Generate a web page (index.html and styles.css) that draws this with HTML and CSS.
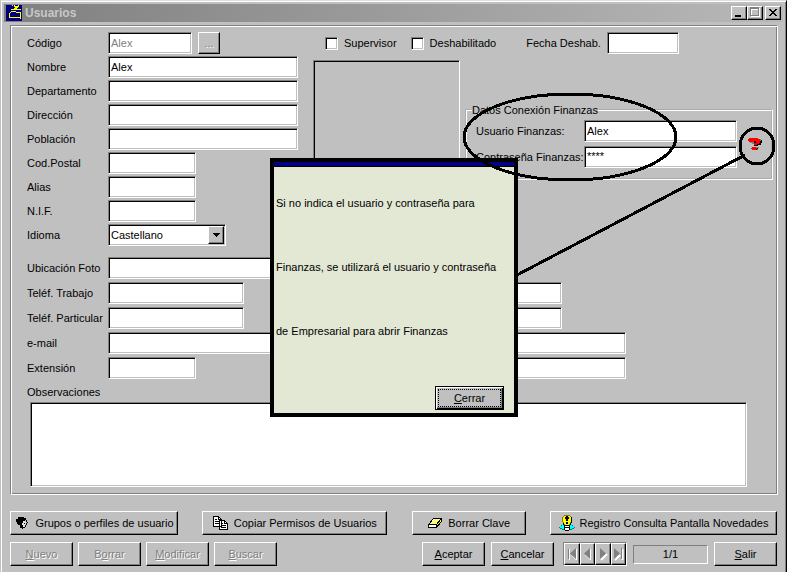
FILE: index.html
```html
<!DOCTYPE html>
<html lang="es">
<head>
<meta charset="utf-8">
<title>Usuarios</title>
<link rel="stylesheet" href="styles.css">
</head>
<body>
<main class="window">
  <header class="titlebar">
    <svg class="app-icon" width="16" height="16" viewBox="0 0 16 16" shape-rendering="crispEdges">
      <rect width="16" height="16" fill="#000080"/>
      <path d="M6 0h1v1H6zM7 1h1v1h1v1h3V2h1V0h-1v1H9V0H8v1H7zM8 3h3v1H8zM5 4h10v1H5zM5 6h5v1h5v7h-1V8h-4V7H5v1H4V7h1zM3 8h1v4h10v1H3z" fill="#ffff00"/>
    </svg>
    <h1 class="title">Usuarios</h1>
    <button class="caption-btn" aria-label="Minimizar"><svg width="12" height="10" shape-rendering="crispEdges"><path d="M3 8h6v2H3z"/></svg></button>
    <button class="caption-btn" aria-label="Maximizar" disabled><svg width="12" height="10" shape-rendering="crispEdges"><path d="M3.500 1v8.500h8V1M3 2.500h9" fill="none" stroke="#fff"/><path d="M2.500.5h8v8h-8zM2 1.500h9" fill="none" stroke="#808080"/></svg></button>
    <button class="caption-btn close" aria-label="Cerrar ventana"><svg width="12" height="10" shape-rendering="crispEdges"><path d="M3 2h2v1h1v1h2V3h1V2h2v1h-1v1H9v1H8v1h1v1h1v1h1v1H9V8H8V7H6v1H5v1H3V8h1V7h1V6h1V5H5V4H4V3H3z"/></svg></button>
  </header>

  <form class="panel">
    <div class="top">
      <div class="fields">
        <label for="codigo">Código</label>
        <div class="code-row"><input id="codigo" class="w-code" value="Alex" disabled><button type="button" class="btn browse" disabled>...</button></div>
        <label for="nombre">Nombre</label><input id="nombre" value="Alex">
        <label for="departamento">Departamento</label><input id="departamento">
        <label for="direccion">Dirección</label><input id="direccion">
        <label for="poblacion">Población</label><input id="poblacion">
        <label for="postal">Cod.Postal</label><input id="postal" class="w-short">
        <label for="alias">Alias</label><input id="alias" class="w-short">
        <label for="nif">N.I.F.</label><input id="nif" class="w-short">
        <label for="idioma">Idioma</label>
        <div class="combo">
          <select id="idioma"><option>Castellano</option></select>
          <span class="combo-arrow"><svg width="7" height="4" shape-rendering="crispEdges"><path d="M0 0h7v1H6v1H5v1H4v1H3V3H2V2H1V1H0z"/></svg></span>
        </div>
      </div>
      <div class="side">
        <div class="flags">
          <input type="checkbox" id="supervisor"><label for="supervisor">Supervisor</label>
          <input type="checkbox" id="deshab"><label for="deshab">Deshabilitado</label>
          <label for="fecha" class="date-label">Fecha Deshab.</label><input id="fecha" class="w-date">
        </div>
        <div class="side-body">
          <div class="photo"></div>
          <fieldset class="finance">
            <legend>Datos Conexión Finanzas</legend>
            <div class="finance-fields">
              <label for="ufin">Usuario Finanzas:</label><input id="ufin" value="Alex">
              <label for="cfin">Contraseña Finanzas:</label><input id="cfin" class="secret" value="****">
            </div>
            <button type="button" class="help" aria-label="Ayuda">
              <svg width="15" height="14" viewBox="0 0 15 14" shape-rendering="crispEdges">
                <path d="M3 2h10v1h2v3h-1v2h-3v1H7V7h3V6H6V5H3zM6 10h5v3H6z"/>
                <path d="M13 2h1v2h-1zM3 5h4v2H5V6H3zM9 10h3v1H9zM10 12h1v1h-1z" fill="#808080"/>
                <path d="M2 1h9v1h2v4h-1v1h-2v1H7V6h2V4H7v1H2V4H1V2h1zM5 10h4v1h1v1H9v1H5v-1H4v-1h1z" fill="#ff0000"/>
              </svg>
            </button>
          </fieldset>
        </div>
      </div>
    </div>

    <div class="contact">
      <label for="foto">Ubicación Foto</label><div class="line"><input id="foto" class="w-photo"></div>
      <label for="trabajo">Teléf. Trabajo</label><div class="line tel"><input id="trabajo" class="w-phone"><input class="w-phone" aria-label="Teléf. Trabajo 2"></div>
      <label for="particular">Teléf. Particular</label><div class="line tel"><input id="particular" class="w-phone"><input class="w-phone" aria-label="Teléf. Particular 2"></div>
      <label for="email">e-mail</label><div class="line"><input id="email"></div>
      <label for="extension">Extensión</label><div class="line"><input id="extension" class="w-short"><input class="w-extra" aria-label="Extensión 2"></div>
    </div>
    <label class="notes-label" for="obs">Observaciones</label>
    <textarea id="obs"></textarea>
  </form>

  <footer class="actions">
    <div class="row">
      <button class="btn icon-btn w-groups">
        <svg width="16" height="16" viewBox="0 0 16 16" shape-rendering="crispEdges">
          <path d="M4 2h6v1h1v3H9v2H8v2h1v3H6v-3H4V9H3V7H2V4h2z"/>
          <path d="M9 6h2v1h1v3h-1v2H9v-2H8V8h1z" fill="#e0e0e0"/>
          <path d="M11 3h1v2h-1zM12 5h1v2h-1zM13 7h1v1h-1zM12 8h1v2h-1zM11 10h1v2h-1zM9 12h2v1H9zM8 13h1v1H8zM10 8h1v1h-1z"/>
        </svg>Grupos o perfiles de usuario</button>
      <button class="btn icon-btn w-copy">
        <svg width="16" height="16" viewBox="0 0 16 16" shape-rendering="crispEdges">
          <path d="M.5 1.500h5l3 3v7h-8zM6.500 5.500h5l3 3v6h-8z" fill="#fff" stroke="#000"/>
          <path d="M5.500 1.500v3h3M11.500 5.500v3h3M2 4.500h2M2 6.500h4M2 8.500h4M8 8.500h2M8 10.500h5M8 12.500h5" fill="none" stroke="#000"/>
        </svg>Copiar Permisos de Usuarios</button>
      <button class="btn icon-btn w-clear">
        <svg width="16" height="16" viewBox="0 0 16 16" shape-rendering="crispEdges">
          <path d="M6.500 3.500h8v3l-5 6h-8v-3z" fill="#fff" stroke="#000"/>
          <path d="M7 4h7l-5 5H2z" fill="#ffff80"/>
          <path d="M10 9l4-5v2l-4 5z" fill="#ffff00"/>
          <path d="M1.500 9.500h8v3M9.500 9.500l5-6" fill="none" stroke="#000"/>
        </svg>Borrar Clave</button>
      <button class="btn icon-btn w-news">
        <svg width="16" height="16" viewBox="0 0 16 16" shape-rendering="crispEdges">
          <path d="M3 9h2v1h1v4H3v-1H1v-2h1v-1h1zM11 9h2v1h1v1h1v2h-2v1h-3v-4h1z" fill="#00ffff"/>
          <path d="M2 10h1v1H2zM0 12h1v1H0zM1 13h2v1H1zM3 14h2v1H3zM13 10h1v1h-1zM15 12h1v1h-1zM13 13h2v1h-2zM11 14h2v1h-2z" fill="#008080"/>
          <path d="M5 0h6v1h1v1h1v5h-1v2h-1v1H5V9H4V7H3V2h1V1h1z" fill="#808000"/>
          <path d="M5 1h6v1h1v5h-1v2h-1v1H6V9H5V7H4V2h1z" fill="#ffff00"/>
          <path d="M12 2h1v6h-1zM11 8h1v2h-1zM4 8h1v2H4z"/>
          <path d="M7 1h2v5H7zM7 7h2v2H7zM6 2h4v2H6z"/>
          <path d="M6 10h4v5H6z" fill="#fff"/>
          <path d="M5 10h6v1H5zM6 12h4v1H6zM5 11h1v4H5zM10 11h1v4h-1zM6 15h4v1H6z"/>
        </svg>Registro Consulta Pantalla Novedades</button>
    </div>
    <div class="row">
      <div class="group">
        <button class="btn cmd" disabled><span><u>N</u>uevo</span></button>
        <button class="btn cmd" disabled><span>B<u>o</u>rrar</span></button>
        <button class="btn cmd" disabled><span><u>M</u>odificar</span></button>
        <button class="btn cmd" disabled><span><u>B</u>uscar</span></button>
      </div>
      <div class="group right">
        <button class="btn cmd"><span><u>A</u>ceptar</span></button>
        <button class="btn cmd"><span><u>C</u>ancelar</span></button>
        <div class="nav">
          <button aria-label="Primero" disabled><svg width="12" height="14"><path d="M3.500 2v11M10.500 2v11l-5-5" fill="none" stroke="#fff"/><path d="M2 2h1v10H2zM10 1v11L4 6.500z" fill="#808080"/></svg></button>
          <button aria-label="Anterior" disabled><svg width="12" height="14"><path d="M9.500 2v11l-5-5" fill="none" stroke="#fff"/><path d="M9 1v11L3 6.500z" fill="#808080"/></svg></button>
          <button aria-label="Siguiente" disabled><svg width="12" height="14"><path d="M4 13l6-6" fill="none" stroke="#fff" stroke-width="2"/><path d="M3 1v11l6-5.500z" fill="#808080"/></svg></button>
          <button aria-label="Último" disabled><svg width="12" height="14"><path d="M3 13l5-5M10.500 2v11" fill="none" stroke="#fff" stroke-width="2"/><path d="M2 1v11l6-5.500zM9 1h1v11H9z" fill="#808080"/></svg></button>
        </div>
        <output class="counter">1/1</output>
        <button class="btn cmd"><span><u>S</u>alir</span></button>
      </div>
    </div>
  </footer>

  <section class="dialog" role="dialog">
    <div class="dialog-bar"></div>
    <p>Si no indica el usuario y contraseña para</p>
    <p>Finanzas, se utilizará el usuario y contraseña</p>
    <p>de Empresarial para abrir Finanzas</p>
    <button class="btn dialog-close"><span><u>C</u>errar</span></button>
  </section>

  <svg class="marks" width="787" height="300" viewBox="0 0 787 300" shape-rendering="crispEdges">
    <ellipse cx="570" cy="137" rx="106" ry="43"/>
    <ellipse cx="757" cy="146" rx="17" ry="18"/>
    <path d="M745 155L517 275"/>
  </svg>
</main>
</body>
</html>
```
FILE: styles.css
```css
* { box-sizing: border-box; }

body {
  margin: 0;
  background: #c0c0c0;
  color: #000;
  font: 11px/14px "Liberation Sans", Arial, sans-serif;
}

button, input, select, textarea {
  margin: 0;
  font: inherit;
  color: inherit;
  border-radius: 0;
}

button { padding: 0; }

.window {
  position: relative;
  min-height: 100vh;
  padding: 2px 2px 5px 2px;
  border: solid;
  border-width: 1px 1px 0 1px;
  border-color: #dfdfdf #000 #000 #c0c0c0;
  box-shadow: inset 1px 1px #fff, inset -1px 0 #808080;
}

.titlebar {
  display: flex;
  align-items: center;
  height: 18px;
  margin: 1px 1px 0 1px;
  padding: 0 2px;
  background: linear-gradient(to right, #808080, #b8b8b8);
}

.app-icon { flex: none; }

.title {
  flex: 1;
  margin: 0 0 0 3px;
  font-size: 12px;
  font-weight: bold;
  color: #c8c8c8;
}

.caption-btn {
  display: flex;
  width: 16px;
  height: 14px;
  background: #c0c0c0;
  border: 1px solid;
  border-color: #fff #000 #000 #fff;
  box-shadow: inset -1px -1px #808080;
}

.close { margin-left: 2px; }

.panel {
  margin: 3px 6px 0 7px;
  padding: 6px 4px 7px 16px;
  border: 1px solid;
  border-color: #808080 #fff #fff #808080;
  box-shadow: inset 1px 1px #fff, inset -1px -1px #808080;
}

.panel input, select, textarea {
  display: block;
  width: 100%;
  height: 22px;
  padding: 0 2px;
  background: #fff;
  border: 1px solid;
  border-color: #808080 #fff #fff #808080;
  box-shadow: inset 1px 1px #000, inset -1px -1px #c0c0c0;
  outline: none;
}

.panel input:disabled { color: #808080; }

.panel .w-code { width: 84px; }
.panel .w-short { width: 88px; }
.panel .w-date { width: 72px; }
.panel .w-phone { width: 136px; }
.panel .w-photo { width: 300px; }
.panel .w-extra { width: 200px; }

.top {
  display: flex;
  gap: 15px;
}

.fields {
  display: grid;
  grid-template-columns: 81px 190px;
  row-gap: 2px;
  align-items: center;
}

.code-row {
  display: flex;
  gap: 6px;
}

.btn {
  height: 24px;
  background: #c0c0c0;
  border: 1px solid;
  border-color: #fff #000 #000 #fff;
  box-shadow: inset -1px -1px #808080;
}

.btn:disabled {
  color: #808080;
  text-shadow: 1px 1px #fff;
}

.browse {
  width: 22px;
  height: 22px;
}

.combo {
  position: relative;
  width: 118px;
}

select { appearance: none; }

.combo-arrow {
  position: absolute;
  top: 2px;
  right: 2px;
  display: flex;
  align-items: center;
  justify-content: center;
  width: 16px;
  height: 18px;
  background: #c0c0c0;
  border: 1px solid;
  border-color: #fff #000 #000 #fff;
  box-shadow: inset -1px -1px #808080;
  pointer-events: none;
}

.side { flex: 1; }

.flags {
  display: flex;
  align-items: center;
  height: 22px;
  padding-left: 12px;
}

.panel input[type="checkbox"] {
  appearance: none;
  width: 13px;
  height: 13px;
  margin-right: 6px;
  padding: 0;
}

.flags label { margin-right: 14px; }

.flags .date-label {
  margin-left: 16px;
  margin-right: 6px;
}

.side-body {
  display: flex;
  align-items: flex-start;
  gap: 5px;
  margin-top: 6px;
}

.photo {
  width: 147px;
  height: 180px;
  border: 1px solid;
  border-color: #808080 #fff #fff #808080;
  box-shadow: inset 1px 1px #000;
}

.finance {
  flex: 1;
  display: flex;
  align-items: center;
  min-width: 0;
  margin: 43px 0 0;
  padding: 3px 9px 10px 9px;
  border: 2px groove #fff;
}

.finance legend {
  margin-left: -4px;
  padding: 0;
}

.finance-fields {
  flex: 1;
  display: grid;
  grid-template-columns: 108px 1fr;
  row-gap: 4px;
  align-items: center;
}

.finance-fields .secret { padding-bottom: 2px; }

.help {
  display: flex;
  margin-left: 10px;
  background: none;
  border: 0;
}

.contact {
  display: grid;
  grid-template-columns: 81px 518px;
  row-gap: 3px;
  align-items: center;
  margin-top: 11px;
}

.line {
  display: flex;
  justify-content: space-between;
}

.tel { width: 454px; }

.notes-label {
  display: block;
  margin-top: 6px;
}

textarea {
  width: auto;
  min-width: calc(100% - 29px);
  height: 85px;
  margin: 3px 26px 0 3px;
  resize: none;
}

.actions {
  display: grid;
  gap: 7px;
  margin: 16px 7px 0 7px;
}

.row, .group { display: flex; }

.row { justify-content: space-between; }

.group { gap: 5px; }

.right { gap: 6px; }

.icon-btn {
  display: flex;
  align-items: center;
  justify-content: center;
  gap: 5px;
}

.w-groups { width: 168px; }
.w-copy { width: 185px; }
.w-clear { width: 114px; }
.w-news { width: 227px; }
.cmd { width: 63px; }

.nav {
  display: flex;
  width: 64px;
  margin-left: 3px;
  border: 1px solid;
  border-color: #808080 #fff #fff #808080;
}

.nav button {
  flex: 1;
  display: flex;
  align-items: center;
  justify-content: center;
  background: #c0c0c0;
  border: 1px solid;
  border-color: #fff #000 #000 #fff;
  box-shadow: inset -1px -1px #808080;
}

.counter {
  width: 75px;
  height: 19px;
  align-self: center;
  line-height: 17px;
  text-align: center;
  border: 1px solid;
  border-color: #808080 #fff #fff #808080;
}

.dialog {
  position: absolute;
  left: 269px;
  top: 157px;
  display: flex;
  flex-direction: column;
  width: 248px;
  height: 259px;
  background: #e3e8d5;
  border: 4px solid #000;
}

.dialog-bar {
  height: 5px;
  margin-bottom: 29px;
  background: #000080;
  border-bottom: 1px solid #000;
}

.dialog p {
  margin: 0 0 50px;
  padding-left: 2px;
  white-space: nowrap;
}

.dialog-close {
  align-self: flex-end;
  flex: none;
  width: 69px;
  margin: -2px 10px 0 0;
  border-color: #000;
  box-shadow: inset 1px 1px #fff, inset -1px -1px #000, inset -2px -2px #808080;
  outline: 1px dotted #000;
  outline-offset: -4px;
}

.marks {
  position: absolute;
  left: -1px;
  top: -1px;
  fill: none;
  stroke: #000;
  stroke-width: 3;
  pointer-events: none;
}
```
